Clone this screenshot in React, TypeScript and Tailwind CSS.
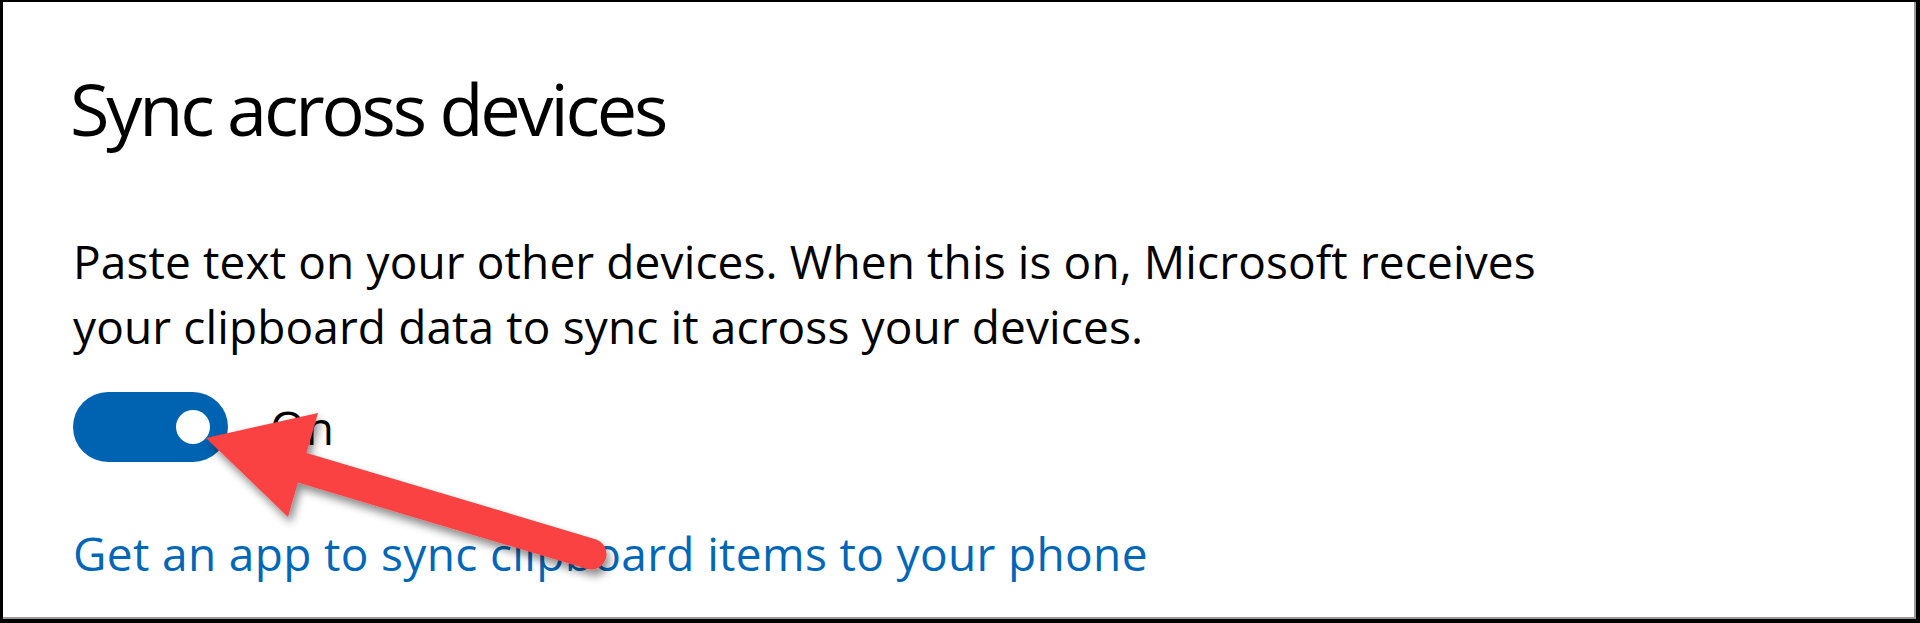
import React from 'react'

function Toggle({ on }: { on: boolean }) {
  return (
    <div className="flex items-center gap-[42px]">
      <div
        className={`w-[155px] h-[70px] rounded-full flex items-center px-[18px] ${
          on ? 'bg-[#0063b1] justify-end' : 'bg-white border-2 border-black justify-start'
        }`}
      >
        <div className={`w-[34px] h-[34px] rounded-full ${on ? 'bg-white' : 'bg-black'}`} />
      </div>
      <span className="text-[46px] leading-[65px] text-black">{on ? 'On' : 'Off'}</span>
    </div>
  )
}

// red callout arrow drawn over the toggle
function Arrow() {
  return (
    <svg className="absolute inset-0 pointer-events-none" width="1920" height="623" viewBox="0 0 1920 623">
      <defs>
        <filter id="arrowShadow" x="-20%" y="-20%" width="140%" height="160%">
          <feDropShadow dx="3" dy="6" stdDeviation="4" floodColor="#000" floodOpacity="0.45" />
        </filter>
      </defs>
      <g filter="url(#arrowShadow)" fill="#fa4343">
        <line x1="290" y1="463" x2="588" y2="552" stroke="#fa4343" strokeWidth="31" strokeLinecap="round" />
        <polygon points="203,436 315,411 285,515" />
      </g>
    </svg>
  )
}

export default function App() {
  return (
    <div
      className="relative w-[1920px] h-[623px] overflow-hidden bg-white border-black border-t-2 border-l-[3px] border-r-[4px] border-b-[4px] shadow-[inset_-2px_-2px_0_#9a9a9a]"
      style={{ fontFamily: '"Open Sans", "Noto Sans", sans-serif' }}
    >
      <div className="flex flex-col items-start pl-[70px]">
        <h1 className="mt-[70px] text-[72px] leading-none font-normal text-black tracking-[-0.044em] -ml-[3px]">
          Sync across devices
        </h1>
        <p className="mt-[85px] text-[46px] leading-[65px] text-black tracking-[0.12px]">
          Paste text on your other devices. When this is on, Microsoft receives
          <br />
          your clipboard data to sync it across your devices.
        </p>
        <div className="mt-[33px]">
          <Toggle on />
        </div>
        <a className="mt-[59px] text-[46px] leading-[65px] text-[#0067b8] tracking-[0.35px] cursor-pointer">
          Get an app to sync clipboard items to your phone
        </a>
      </div>
      <Arrow />
    </div>
  )
}
